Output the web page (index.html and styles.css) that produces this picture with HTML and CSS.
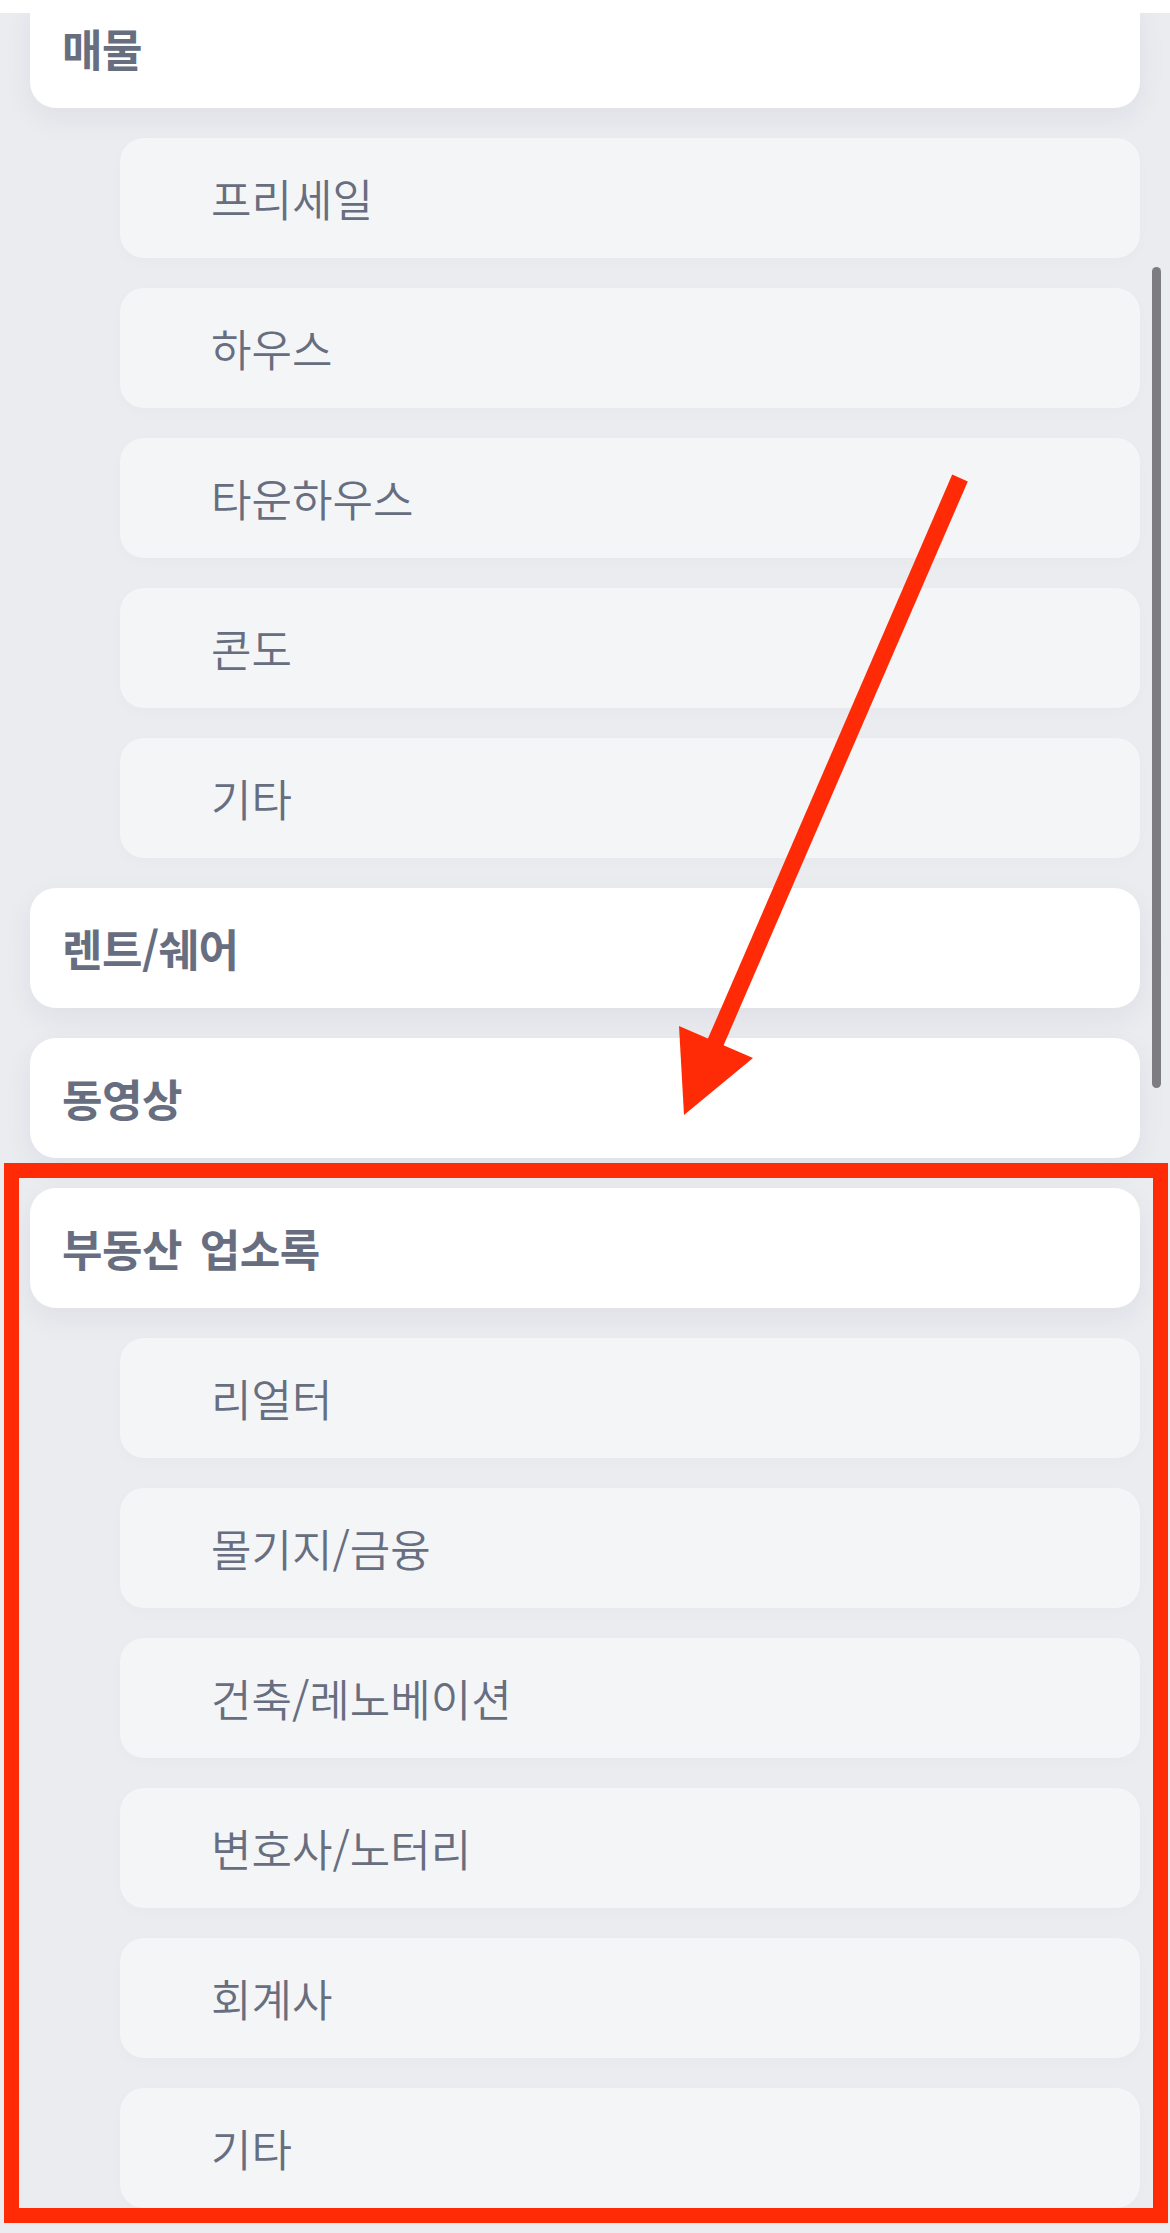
FILE: index.html
```html
<!doctype html>
<html lang="ko">
    <head>
        <meta charset="UTF-8" />
        <meta name="viewport" content="width=device-width, initial-scale=1.0" />
        <title>카테고리</title>
        <link rel="stylesheet" href="styles.css">
    </head>
    <body>
        <div class="top-bar"></div>

        <nav class="menu">
            <div class="menu-title">매물</div>
            <ul class="submenu">
                <li>프리세일</li>
                <li>하우스</li>
                <li>타운하우스</li>
                <li>콘도</li>
                <li>기타</li>
            </ul>

            <div class="menu-title">렌트/쉐어</div>

            <div class="menu-title">동영상</div>

            <div class="menu-title">부동산 업소록</div>
            <ul class="submenu">
                <li>리얼터</li>
                <li>몰기지/금융</li>
                <li>건축/레노베이션</li>
                <li>변호사/노터리</li>
                <li>회계사</li>
                <li>기타</li>
            </ul>
        </nav>

        <div class="scrollbar"></div>

        <!-- markup annotation -->
        <svg class="annotation" viewBox="0 0 1170 2233" xmlns="http://www.w3.org/2000/svg">
            <line x1="960" y1="478" x2="714" y2="1046" stroke="#ff2a06" stroke-width="17" />
            <polygon points="679,1026 753,1058 684,1115" fill="#ff2a06" />
        </svg>
        <div class="highlight"></div>
    </body>
</html>
```

FILE: styles.css
```css
* {
    margin: 0;
    padding: 0;
    box-sizing: border-box;
}

body {
    font-family: "Noto Sans CJK KR", "Noto Sans", sans-serif;
    background: #ebecf0;
    color: #676e80;
    min-height: 2233px;
    overflow: hidden;
    position: relative;
}

.top-bar {
    position: absolute;
    top: 0;
    left: 0;
    width: 100%;
    height: 13px;
    background: white;
    z-index: 5;
}

.menu {
    display: flex;
    flex-direction: column;
    gap: 30px;
    padding: 0 30px;
    margin-top: -12px;
}

.menu-title {
    height: 120px;
    display: flex;
    align-items: center;
    padding-left: 32px;
    background: white;
    border-radius: 26px;
    box-shadow: 0 10px 30px rgba(30, 40, 70, 0.06);
    font-size: 44px;
    font-weight: 700;
    letter-spacing: -0.5px;
    word-spacing: 6px;
}

.submenu {
    list-style: none;
    display: flex;
    flex-direction: column;
    gap: 30px;
    margin-left: 90px;
}

.submenu li {
    height: 120px;
    display: flex;
    align-items: center;
    padding-left: 91px;
    background: #f4f5f7;
    border-radius: 24px;
    box-shadow: 0 4px 14px rgba(30, 40, 70, 0.02);
    font-size: 44px;
    font-weight: 350;
    letter-spacing: 0;
}

.scrollbar {
    position: absolute;
    left: 1152px;
    top: 267px;
    width: 9px;
    height: 821px;
    border-radius: 5px;
    background: #7c7c81;
}

.annotation {
    position: absolute;
    top: 0;
    left: 0;
    width: 1170px;
    height: 2233px;
    pointer-events: none;
}

.highlight {
    position: absolute;
    left: 4px;
    top: 1163px;
    width: 1164px;
    height: 1060px;
    border: 15px solid #ff2a06;
    pointer-events: none;
}
```
